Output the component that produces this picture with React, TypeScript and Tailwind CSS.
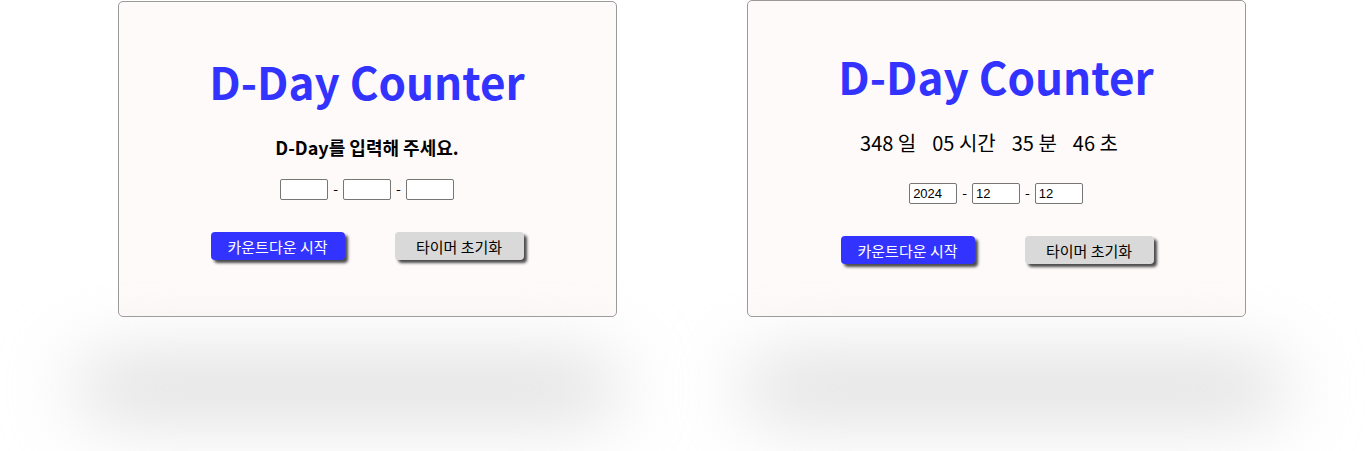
import React from "react";

const font = { fontFamily: '"Noto Sans CJK KR", "Noto Sans", sans-serif' };

function DateInputs({ values, className }: { values: string[]; className?: string }) {
  return (
    <div className={"flex items-center gap-[5px] " + (className ?? "")}>
      {values.map((v, i) => (
        <React.Fragment key={i}>
          {i > 0 && <span className="text-[14px] leading-none text-black -mt-[3px]">-</span>}
          <input
            readOnly
            value={v}
            className="w-[48px] h-[21px] border border-[#767676] rounded-[2px] bg-white px-[3px] text-[13px] text-black outline-none font-['Liberation_Sans',Arial,sans-serif]"
          />
        </React.Fragment>
      ))}
    </div>
  );
}

function Buttons({ className }: { className?: string }) {
  return (
    <div className={"flex gap-[50px] " + (className ?? "")}>
      <button className="w-[134px] h-[28px] rounded-[4px] bg-[#3333ff] text-white text-[15px] leading-none shadow-[3px_3px_3px_#4a4a4a]">
        카운트다운 시작
      </button>
      <button className="w-[129px] h-[28px] rounded-[4px] bg-[#d9d9d9] text-black text-[15px] leading-none shadow-[3px_3px_3px_#4a4a4a]">
        타이머 초기화
      </button>
    </div>
  );
}

function Card({
  children,
  className,
  shadowClass,
}: {
  children: React.ReactNode;
  className?: string;
  shadowClass?: string;
}) {
  return (
    <div className="w-[499px] flex flex-col">
      <div
        className={
          "w-[499px] border border-[#999] rounded-[5px] bg-[#fffafa] flex flex-col items-center " +
          (className ?? "")
        }
      >
        {children}
      </div>
      <div className={"w-[540px] h-[46px] rounded-full bg-[#d2d2d2] blur-[38px] " + (shadowClass ?? "")} />
    </div>
  );
}

export default function App() {
  return (
    <div className="w-[1365px] h-[451px] bg-white overflow-hidden" style={font}>
      <div className="flex justify-center gap-[130px] pr-[2px]">
        <div className="mt-[1px]">
          <Card className="h-[316px] pt-[57px]" shadowClass="mt-[48px] -ml-[40px]">
            <h1 className="text-[44px] font-bold leading-none text-[#3333ff]">D-Day Counter</h1>
            <h3 className="mt-[35px] text-[18px] font-bold leading-none text-black">D-Day를 입력해 주세요.</h3>
            <DateInputs values={["", "", ""]} className="mt-[23px]" />
            <Buttons className="mt-[32px]" />
          </Card>
        </div>
        <Card className="h-[317px] pt-[53px]" shadowClass="mt-[48px] -ml-[3px]">
          <h1 className="text-[44px] font-bold leading-none text-[#3333ff]">D-Day Counter</h1>
          <div className="mt-[35px] mr-[14px] flex gap-[16px] text-[20px] leading-none text-black">
            <span>348 일</span>
            <span>05 시간</span>
            <span>35 분</span>
            <span>46 초</span>
          </div>
          <DateInputs values={["2024", "12", "12"]} className="mt-[30px]" />
          <Buttons className="mt-[32px] ml-[2px]" />
        </Card>
      </div>
    </div>
  );
}
